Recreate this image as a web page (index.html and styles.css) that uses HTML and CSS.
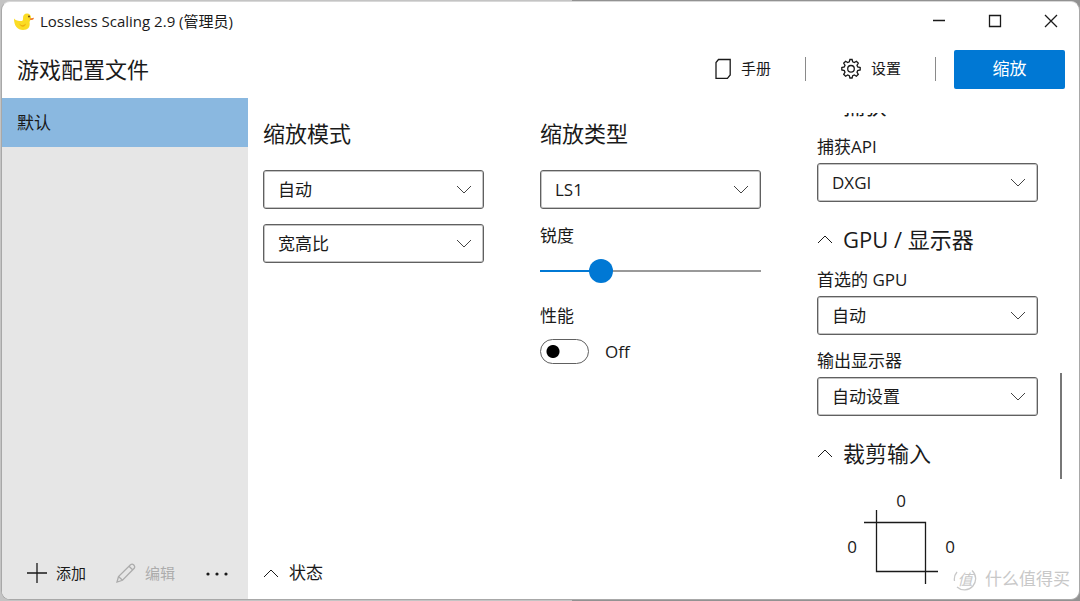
FILE: index.html
```html
<!DOCTYPE html>
<html lang="zh-CN">
<head>
<meta charset="utf-8">
<meta name="viewport" content="width=device-width, initial-scale=1">
<title>Lossless Scaling 2.9 (管理员)</title>
<link rel="stylesheet" href="styles.css">
</head>
<body>
<div class="window">
  <header class="titlebar">
    <svg class="app-icon" viewBox="0 0 20 17" aria-hidden="true">
      <path fill="#fbdc24" d="M0 5.500c1.500 2 4 2.500 8 2.500 1-.6 1-1.500 1-3 0-3 1.500-4.500 4-4.500s4 1.800 4 4c0 2-1 3-1.500 4.500 1 5-1.500 8-6.500 8-5.500 0-9-4-9-11.500z"/>
      <path fill="#eeb010" d="M5 10c1.500 2.500 4 3 7 .5-.5 4-5.500 4.500-7-.5z"/>
      <path fill="#f0802c" d="M15.500 5.500l4.300-.8c.3 1.500-.8 2.300-3.500 2.200z"/>
      <circle cx="15" cy="3.500" r="1" fill="#6a4a20"/>
    </svg>
    <span class="app-title">Lossless Scaling 2.9 (管理员)</span>
    <div class="window-buttons">
      <button class="window-button" aria-label="最小化"><svg width="14" height="14" viewBox="0 0 14 14"><path d="M1 6.500h12"/></svg></button>
      <button class="window-button" aria-label="最大化"><svg width="14" height="14" viewBox="0 0 14 14"><path d="M1.500 1.500h11v11h-11z"/></svg></button>
      <button class="window-button" aria-label="关闭"><svg width="14" height="14" viewBox="0 0 14 14"><path d="M1 1l12 12M13 1L1 13"/></svg></button>
    </div>
  </header>

  <div class="toolbar">
    <h1 class="heading">游戏配置文件</h1>
    <div class="toolbar-actions">
      <button class="tool-button">
        <svg width="18" height="22" viewBox="0 0 18 22"><path d="M4.500 1.500h11.700v15.500l-2.800 3.300H2V4.500z"/></svg>
        <span>手册</span>
      </button>
      <span class="divider"></span>
      <button class="tool-button">
        <svg width="22" height="22" viewBox="0 0 22 22"><path d="M9.300 3.900 9.900 1.500h2.200l.6 2.400 1.600.7 2.100-1.300 1.900 1.900-1.300 2.100.7 1.600 2.500.6v2.500l-2.500.6-.7 1.600 1.300 2.100-1.900 1.900-2.100-1.300-1.600.7-.6 2.400H9.900l-.6-2.400-1.600-.7-2.100 1.300-1.900-1.900L5 14.200l-.7-1.600-2.500-.6V9.500l2.500-.6L5 7.300 3.700 5.200l1.900-1.900 2.100 1.300z"/><circle cx="11" cy="10.800" r="3.300"/></svg>
        <span>设置</span>
      </button>
      <span class="divider"></span>
      <button class="scale-button">缩放</button>
    </div>
  </div>

  <div class="body">
    <aside class="sidebar">
      <button class="profile">默认</button>
      <div class="profile-actions">
        <button class="profile-action"><svg width="20" height="20" viewBox="0 0 20 20"><path d="M10 0v20M0 10h20"/></svg><span>添加</span></button>
        <button class="profile-action" disabled><svg width="20" height="20" viewBox="0 0 20 20"><path d="M1 19l1.500-5.500L14.500 1.700c2.300-1.700 5.200 1.200 3.700 3.600L6.500 17.300zM2.500 13.500l4 3.800M13 3.200l3.800 3.800"/></svg><span>编辑</span></button>
        <button class="profile-action more" aria-label="更多"><svg width="24" height="20" viewBox="0 0 24 20"><circle cx="3" cy="11" r="1.600"/><circle cx="12" cy="11" r="1.600"/><circle cx="21" cy="11" r="1.600"/></svg></button>
      </div>
    </aside>

    <main class="content">
      <section class="column">
        <h2 class="heading">缩放模式</h2>
        <div class="field">
          <div class="select-box">
            <select aria-label="缩放模式"><option>自动</option></select>
            <svg class="chevron" viewBox="0 0 16 9"><path d="M1 1l7 7 7-7"/></svg>
          </div>
        </div>
        <div class="field">
          <div class="select-box">
            <select aria-label="自动缩放方式"><option>宽高比</option></select>
            <svg class="chevron" viewBox="0 0 16 9"><path d="M1 1l7 7 7-7"/></svg>
          </div>
        </div>
      </section>

      <section class="column">
        <h2 class="heading">缩放类型</h2>
        <div class="field">
          <div class="select-box">
            <select aria-label="缩放类型"><option>LS1</option></select>
            <svg class="chevron" viewBox="0 0 16 9"><path d="M1 1l7 7 7-7"/></svg>
          </div>
        </div>
        <div class="field">
          <label class="label" for="sharpness">锐度</label>
          <input class="slider" id="sharpness" type="range" min="0" max="100" value="25">
        </div>
        <div class="field">
          <label class="label" for="performance">性能</label>
          <div class="switch-row">
            <input class="switch" id="performance" type="checkbox" role="switch">
            <span>Off</span>
          </div>
        </div>
      </section>

      <section class="column scroll-column">
        <div class="scroll-content">
          <h2 class="group-title"><svg class="chevron" viewBox="0 0 16 9"><path d="M1 8l7-7 7 7"/></svg>捕获</h2>
          <div class="setting">
            <label class="label" for="api">捕获API</label>
            <div class="select-box">
              <select id="api"><option>DXGI</option></select>
              <svg class="chevron" viewBox="0 0 16 9"><path d="M1 1l7 7 7-7"/></svg>
            </div>
          </div>
          <h2 class="group-title"><svg class="chevron" viewBox="0 0 16 9"><path d="M1 8l7-7 7 7"/></svg>GPU / 显示器</h2>
          <div class="setting">
            <label class="label" for="gpu">首选的 GPU</label>
            <div class="select-box">
              <select id="gpu"><option>自动</option></select>
              <svg class="chevron" viewBox="0 0 16 9"><path d="M1 1l7 7 7-7"/></svg>
            </div>
          </div>
          <div class="setting">
            <label class="label" for="display">输出显示器</label>
            <div class="select-box">
              <select id="display"><option>自动设置</option></select>
              <svg class="chevron" viewBox="0 0 16 9"><path d="M1 1l7 7 7-7"/></svg>
            </div>
          </div>
          <h2 class="group-title"><svg class="chevron" viewBox="0 0 16 9"><path d="M1 8l7-7 7 7"/></svg>裁剪输入</h2>
          <div class="crop">
            <input class="crop-value crop-top" aria-label="上" value="0">
            <input class="crop-value crop-left" aria-label="左" value="0">
            <svg class="crop-icon" width="74" height="74" viewBox="0 0 74 74"><path d="M0 12.500h61.500V74M12.500 0v61.500H74"/></svg>
            <input class="crop-value crop-right" aria-label="右" value="0">
          </div>
        </div>
        <div class="scrollbar"></div>
      </section>

      <button class="status"><svg class="chevron" viewBox="0 0 16 9"><path d="M1 8l7-7 7 7"/></svg>状态</button>
    </main>
  </div>
</div>
<div class="watermark">
  <span class="watermark-logo"><svg width="24" height="24" viewBox="0 0 24 24"><path d="M19 3.500A11 11 0 0 1 4 20M1.500 14A11 11 0 0 1 4 5"/></svg><span>值</span></span>
  <span>什么值得买</span>
</div>
</body>
</html>
```
FILE: styles.css
```css
* {
  box-sizing: border-box;
}

body {
  margin: 0;
  height: 100vh;
  padding: 1px 0 1px 1px;
  display: flex;
  background: linear-gradient(to right, #c4c4c4 53%, #929292 53%);
  color: #1a1a1a;
  font: 17px/24px "Open Sans", "Noto Sans CJK SC", sans-serif;
}

button,
select,
input {
  margin: 0;
  padding: 0;
  border: 0;
  background: none;
  color: inherit;
  font: inherit;
}

svg {
  flex: none;
  fill: none;
  stroke: currentColor;
  stroke-width: 1.3;
}

.window {
  flex: 1;
  min-width: 0;
  display: flex;
  flex-direction: column;
  overflow: hidden;
  border: 1px solid #a8a8a8;
  border-top-color: #d8d8d8;
  border-radius: 9px;
  background: #fff;
}

.titlebar {
  display: flex;
  align-items: center;
  height: 38px;
  padding-left: 12px;
  font-size: 15px;
}

.app-icon {
  width: 20px;
  height: 17px;
  margin-right: 6px;
  stroke: none;
}

.window-buttons {
  display: flex;
  margin-left: auto;
}

.window-button {
  display: flex;
  align-items: center;
  justify-content: center;
  width: 56px;
  height: 38px;
}

.toolbar {
  display: flex;
  align-items: center;
  justify-content: space-between;
  height: 58px;
  padding: 0 14px 0 15px;
}

.heading,
.group-title {
  margin: 0;
  font-size: 22px;
  line-height: 32px;
  font-weight: inherit;
}

.toolbar-actions,
.tool-button {
  display: flex;
  align-items: center;
}

.tool-button {
  gap: 9px;
  font-size: 15px;
  line-height: 20px;
}

.tool-button span {
  padding-bottom: 2px;
}

.divider {
  width: 1px;
  height: 24px;
  margin: 0 34px;
  background: #8a8a8a;
}

.divider:nth-of-type(2) {
  margin-right: 18px;
}

.scale-button {
  width: 111px;
  height: 39px;
  border-radius: 2px;
  background: #0078d4;
  color: #fff;
}

.body {
  flex: 1;
  min-height: 0;
  display: flex;
}

.sidebar {
  flex: none;
  width: 246px;
  display: flex;
  flex-direction: column;
  justify-content: space-between;
  background: #e6e6e6;
}

.profile {
  height: 49px;
  padding-left: 15px;
  background: #8ab8e0;
  text-align: left;
}

.profile-actions {
  display: flex;
  gap: 30px;
  height: 52px;
  padding-left: 25px;
  font-size: 15px;
}

.profile-action {
  display: flex;
  align-items: center;
  gap: 9px;
}

.profile-action:disabled {
  color: #acacac;
}

.more svg {
  fill: currentColor;
  stroke: none;
}

.content {
  flex: 1;
  min-width: 0;
  display: grid;
  grid-template-columns: repeat(3, 1fr);
  grid-template-rows: 1fr 52px;
}

.column {
  min-width: 0;
  padding: 19px 41px 0 15px;
}

.column > .heading {
  margin-bottom: 21px;
}

.field {
  margin-bottom: 15px;
}

.label {
  display: block;
}

.select-box {
  display: grid;
  align-items: center;
}

.select-box > * {
  grid-area: 1 / 1;
}

select {
  width: 100%;
  height: 39px;
  padding: 0 40px 0 14px;
  appearance: none;
  border: 1px solid #606060;
  border-radius: 3px;
  box-shadow: inset 0 0 0 1px #c4c4c4;
}

.chevron {
  width: 16px;
  height: 9px;
  stroke-width: 1;
}

.select-box .chevron {
  justify-self: end;
  margin-right: 12px;
  color: #444;
  pointer-events: none;
}

.slider {
  display: block;
  width: 100%;
  height: 24px;
  margin: 11px 0 21px;
  appearance: none;
  background: linear-gradient(to right, #0078d4 27%, #999 27%) center / 100% 2px no-repeat;
}

.slider::-webkit-slider-thumb {
  appearance: none;
  width: 24px;
  height: 24px;
  border-radius: 50%;
  background: #0078d4;
}

.switch-row {
  display: flex;
  align-items: center;
  gap: 16px;
  margin-top: 11px;
}

.switch {
  width: 49px;
  height: 25px;
  appearance: none;
  border: 1px solid #606060;
  border-radius: 13px;
  background: radial-gradient(circle at 12px 50%, #000 6px, transparent 7px);
}

.scroll-column {
  grid-area: 1 / 3 / 3 / 4;
  display: flex;
  margin-top: 15px;
  padding: 0 17px 0 15px;
  overflow: hidden;
}

.scroll-content {
  flex: 1;
  min-width: 0;
  margin: -24px 22px 0 0;
}

.scrollbar {
  width: 2px;
  height: 106px;
  margin-top: 260px;
  background: #777;
}

.group-title {
  display: flex;
  align-items: center;
  gap: 10px;
  margin-bottom: 14px;
}

.setting {
  margin-bottom: 14px;
}

.setting .label {
  margin-bottom: 4px;
}

.setting + .group-title {
  margin-top: 21px;
  margin-bottom: 13px;
}

.crop {
  display: grid;
  grid-template-columns: 24px 74px 24px;
  grid-template-rows: 18px 74px;
  align-items: center;
  width: 122px;
  margin: 23px 0 0 23px;
}

.crop-value {
  width: 24px;
  height: 24px;
  text-align: center;
}

.crop-top {
  grid-area: 1 / 2;
  justify-self: center;
}

.crop-left {
  grid-area: 2 / 1;
}

.crop-icon {
  grid-area: 2 / 2;
}

.crop-right {
  grid-area: 2 / 3;
}

.status {
  grid-area: 2 / 1;
  display: flex;
  align-items: center;
  gap: 10px;
  padding-left: 15px;
}

.watermark {
  position: absolute;
  right: 10px;
  bottom: 10px;
  display: flex;
  align-items: center;
  gap: 8px;
  color: #c8c8c8;
}

.watermark-logo {
  display: grid;
  place-items: center;
  width: 24px;
  height: 24px;
  font-size: 15px;
  font-style: italic;
}

.watermark-logo > * {
  grid-area: 1 / 1;
}
```
